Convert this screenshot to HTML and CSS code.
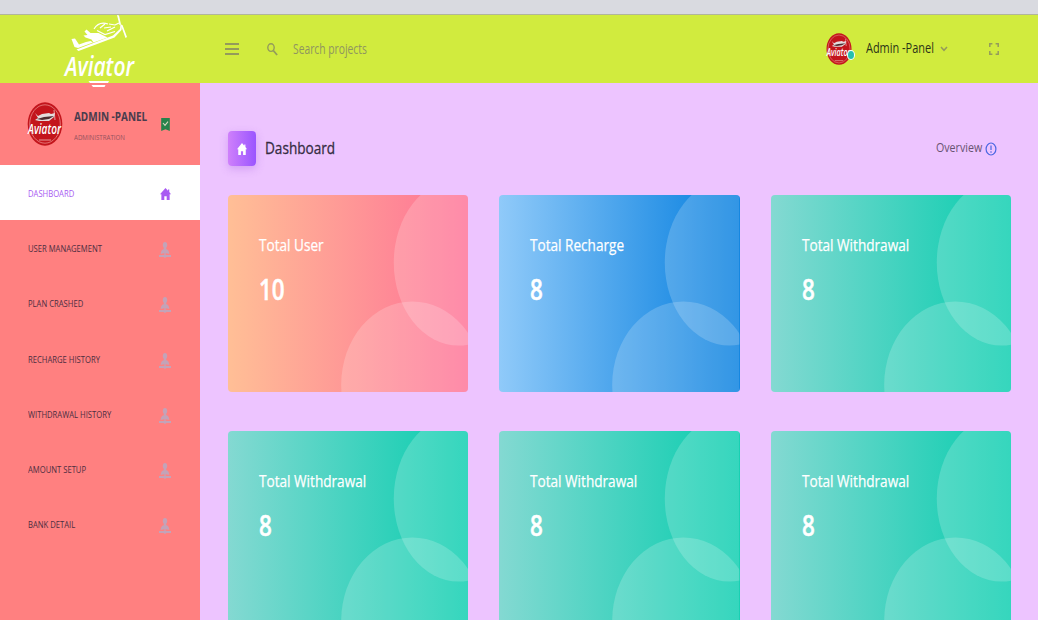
FILE: index.html
```html
<!DOCTYPE html>
<html lang="en">
<head>
<meta charset="utf-8">
<title>Aviator Admin</title>
<link rel="stylesheet" href="styles.css">
</head>
<body>
<svg class="defs" width="0" height="0">
  <symbol id="badge" viewBox="0 0 36 44">
    <ellipse cx="18" cy="22" rx="17.3" ry="21.7" fill="#c3151c"/>
    <ellipse cx="18" cy="22" rx="15.3" ry="19.2" fill="none" stroke="#f09a96" stroke-width=".7"/>
    <path d="M8 11l3 3 4-2 7-1 2 1 4-1-1 4-5 4H12l-4-1 3-2z" fill="#e4dcdc"/>
    <path d="M10 17l7-2 10-1-5 3-7 1z" fill="#4c2c30"/>
    <path d="M27 8l1 10" stroke="#f4d5d5" stroke-width=".7"/>
    <path d="M12 38h12" stroke="#e9a8a6" stroke-width=".9"/>
  </symbol>
  <symbol id="home" viewBox="0 0 12 12"><path d="M6 0l2.7 2.7V1.4h1.4v2.7L12 6.2h-1.5V12H7.3V8.2H4.7V12H1.5V6.2H0z"/></symbol>
  <symbol id="person" viewBox="0 0 12 16">
    <ellipse cx="6" cy="3" rx="2.2" ry="2.9"/>
    <path d="M4.800 5h2.400v2H4.800zM1.700 12c0-3.200 1.600-5.100 4.300-5.100s4.300 1.900 4.300 5.100L7 11.200l-1 1-1-1z"/>
    <path d="M0 13.100h4.500l1.500-1 1.500 1H12v1.900H7.400L6 16l-1.400-1H0z"/>
  </symbol>
  <symbol id="rings" viewBox="0 0 240 196">
    <ellipse cx="230" cy="66.5" rx="64.5" ry="83"/>
    <ellipse cx="184" cy="188.5" rx="71" ry="83"/>
  </symbol>
</svg>

<div class="strip"></div>
<header class="topbar">
  <div class="brand">
    <svg class="logo" width="76" height="76" viewBox="0 0 76 76" fill="#fff">
      <path d="M8.500 24l3.500-.5 4 6 7-2.500 4.500-1 2.500 1.500-15 5.500-3.500-1z"/>
      <path d="M13.500 34.500L50 20.500l7-6.500.5-5 1.500 1-.5 5-7 7.500-36 13.500z"/>
      <path d="M20.500 20.500l4-.5-3-3.500 2-2 4 3.500 8 0 9 4.500-14 5-2-3-6-2z"/>
      <g fill="none" stroke="#fff" stroke-width="1.200">
        <path d="M31 14c3-5 8-7 14-5M37 13l5-4M34 15.500l8 4 10-3M46 9l6 1 4-2M41 13l7-1M44 16l8-4"/>
      </g>
      <path d="M54 0l2 .5 2 9-1.500.5zM58 10.500l1.500-.5 4.500 12-1.500 1z"/>
      <text class="script" x="2" y="60.500" font-size="27" textLength="69" lengthAdjust="spacingAndGlyphs">Aviator</text>
      <path d="M25.500 66H46l-1 2H27zM28.500 70h14l-1 2H30z"/>
    </svg>
  </div>
  <svg class="menu" width="14" height="12" viewBox="0 0 14 12" fill="#949b5b"><path d="M0 0h14v2H0zM0 5h14v2H0zM0 10h14v2H0z"/></svg>
  <svg class="search-icon" width="11" height="13" viewBox="0 0 11 13" fill="none" stroke="#949b5b"><ellipse cx="4" cy="4.6" rx="3.2" ry="3.8" stroke-width="1.4"/><path d="M6.3 7.5l3.8 4.5" stroke-width="1.8"/></svg>
  <span class="search"><span class="t t-search">Search projects</span></span>
  <div class="profile">
    <svg class="avatar" width="26" height="32" viewBox="0 0 36 44" preserveAspectRatio="none"><use href="#badge" width="36" height="44"/><text class="script" x="1" y="31.500" font-size="14" textLength="33" lengthAdjust="spacingAndGlyphs" fill="#fff">Aviator</text></svg>
    <i class="online"></i>
  </div>
  <span class="username"><span class="t t-user">Admin -Panel</span></span>
  <svg class="caret" width="8" height="6" viewBox="0 0 8 6" fill="none" stroke="#949b5b" stroke-width="1.5"><path d="M1 1l3 3.3L7 1"/></svg>
  <svg class="full" width="10" height="12" viewBox="0 0 10 12" fill="none" stroke="#949b5b" stroke-width="1.5"><path d="M.8 4V.8H3.4M6.6.8h2.6V4M9.2 8v3.2H6.6M3.4 11.2H.8V8"/></svg>
</header>

<div class="body">
  <aside class="sidebar">
    <div class="me">
      <svg class="avatar" width="36" height="44" viewBox="0 0 36 44"><use href="#badge" width="36" height="44"/><text class="script" x="1" y="31.500" font-size="14" textLength="33" lengthAdjust="spacingAndGlyphs" fill="#fff">Aviator</text></svg>
      <div class="me-text">
        <div class="me-name"><span class="t t-name">ADMIN -PANEL</span></div>
        <div class="me-role"><span class="t t-role">ADMINISTRATION</span></div>
      </div>
      <svg class="bookmark" width="9" height="13" viewBox="0 0 9 13"><path d="M.2 0h8.600v13L4.500 11.200.2 13z" fill="#26834b"/><path d="M2 5l2 2.300L7 3.700" fill="none" stroke="#d8d8c2" stroke-width="1.100"/></svg>
    </div>
    <nav>
      <a class="item active"><span class="t t-nav">DASHBOARD</span><svg class="ni" width="11" height="12" viewBox="0 0 12 12" preserveAspectRatio="none"><use href="#home"/></svg></a>
      <a class="item"><span class="t t-nav">USER MANAGEMENT</span><svg class="ni" width="12" height="16"><use href="#person"/></svg></a>
      <a class="item"><span class="t t-nav">PLAN CRASHED</span><svg class="ni" width="12" height="16"><use href="#person"/></svg></a>
      <a class="item"><span class="t t-nav">RECHARGE HISTORY</span><svg class="ni" width="12" height="16"><use href="#person"/></svg></a>
      <a class="item"><span class="t t-nav">WITHDRAWAL HISTORY</span><svg class="ni" width="12" height="16"><use href="#person"/></svg></a>
      <a class="item"><span class="t t-nav">AMOUNT SETUP</span><svg class="ni" width="12" height="16"><use href="#person"/></svg></a>
      <a class="item"><span class="t t-nav">BANK DETAIL</span><svg class="ni" width="12" height="16"><use href="#person"/></svg></a>
    </nav>
  </aside>
  <main class="main">
    <div class="head">
      <span class="tile"><svg width="10" height="12" viewBox="0 0 12 12" preserveAspectRatio="none" fill="#fff"><use href="#home"/></svg></span>
      <h1><span class="t t-title">Dashboard</span></h1>
      <span class="overview"><span class="t t-over">Overview</span></span>
      <svg width="12" height="14" viewBox="0 0 12 14" fill="none" stroke="#4a67e2" stroke-width="1.200"><ellipse cx="6" cy="7" rx="4.900" ry="6"/><path d="M6 3.500v4.500M6 9.300v1.500"/></svg>
    </div>
    <section class="cards">
      <article class="card pink"><svg class="rings"><use href="#rings"/></svg><h2><span class="t t-card">Total User</span></h2><p><span class="t t-num">10</span></p></article>
      <article class="card blue"><svg class="rings"><use href="#rings"/></svg><h2><span class="t t-card">Total Recharge</span></h2><p><span class="t t-num">8</span></p></article>
      <article class="card green"><svg class="rings"><use href="#rings"/></svg><h2><span class="t t-card">Total Withdrawal</span></h2><p><span class="t t-num">8</span></p></article>
      <article class="card green"><svg class="rings"><use href="#rings"/></svg><h2><span class="t t-card">Total Withdrawal</span></h2><p><span class="t t-num">8</span></p></article>
      <article class="card green"><svg class="rings"><use href="#rings"/></svg><h2><span class="t t-card">Total Withdrawal</span></h2><p><span class="t t-num">8</span></p></article>
      <article class="card green"><svg class="rings"><use href="#rings"/></svg><h2><span class="t t-card">Total Withdrawal</span></h2><p><span class="t t-num">8</span></p></article>
    </section>
  </main>
</div>
</body>
</html>
```
FILE: styles.css
```css
* { box-sizing: border-box; }
body {
  margin: 0;
  height: 620px;
  overflow: hidden;
  display: flex;
  flex-direction: column;
  font-family: "Open Sans", "Noto Sans", sans-serif;
  background: #edc4ff;
}
svg { display: block; flex: none; }
.defs { position: absolute; }
h1, h2, p { margin: 0; font-weight: 400; }

/* Condensed lettering: text is set at full width and narrowed from its left edge. */
.t { display: inline-block; white-space: nowrap; transform-origin: 0 50%; }
.script { font-family: "Open Sans", sans-serif; font-style: italic; font-weight: 600; }

.strip { flex: none; height: 15px; background: #d9dae0; border-bottom: 1px solid #b1b59a; }
.topbar {
  flex: none;
  height: 68px;
  display: flex;
  align-items: center;
  background: #d1eb3e;
  position: relative;
  z-index: 2;
}
.brand { width: 225px; height: 68px; padding-left: 63px; }
.logo, .avatar { overflow: visible; }
.menu { margin-right: 28px; }
.search-icon { margin-right: 15px; }
.search { width: 533px; margin-top: -1px; font-size: 14px; color: #8f9560; }
.t-search { transform: scaleX(.735); }
.profile { position: relative; width: 40px; }
.online {
  position: absolute;
  left: 21px;
  top: 17px;
  width: 8px;
  height: 10px;
  border: 1.5px solid #fff;
  border-radius: 50%;
  background: #25bfae;
}
.username { width: 74px; margin-top: -4px; font-size: 15px; color: #2c3318; }
.t-user { transform: scaleX(.73); }
.full { margin-left: 41px; }

.body { flex: 1; display: flex; min-height: 0; }
.sidebar { flex: none; width: 200px; background: #ff8080; color: #4d2e40; }
.me { height: 82px; padding: 0 30px 0 27px; display: flex; align-items: center; }
.me-text { width: 98px; padding: 6px 0 0 11px; }
.me-name { height: 21px; line-height: 21px; font-size: 12px; font-weight: 700; color: #4a3c4d; }
.me-role { height: 21px; line-height: 21px; font-size: 7.5px; color: #94525e; }
.t-name { transform: scaleX(.83); }
.t-role { transform: scaleX(.82); }
.item {
  height: 55.2px;
  padding: 0 29px 0 28px;
  display: flex;
  align-items: center;
  justify-content: space-between;
  font-size: 9px;
}
.item.active { background: #fff; color: #a85af2; margin-bottom: 1px; padding-top: 2px; }
.t-nav { transform: scaleX(.85); }
.ni { fill: #c3a3b8; margin-top: 3px; }
.active .ni { fill: #a85af2; margin-top: 0; }

.main { flex: 1; padding: 48px 27px 0 28px; }
.head { height: 35px; display: flex; align-items: center; padding-right: 14px; }
.tile {
  width: 28px;
  height: 35px;
  border-radius: 4px;
  display: flex;
  align-items: center;
  justify-content: center;
  background: linear-gradient(90deg, #cf80fb, #9a55ff);
  box-shadow: 0 3px 8px rgba(150, 80, 220, .3);
}
h1 { flex: 1; padding-left: 9px; margin-top: -2px; font-size: 17px; color: #352c42; -webkit-text-stroke: .3px; }
.t-title { transform: scaleX(.8); }
.overview { width: 49px; margin-top: -3px; font-size: 13.500px; color: #675371; }
.t-over { transform: scaleX(.79); }

.cards {
  margin-top: 29.400px;
  display: grid;
  grid-template-columns: repeat(3, 240.400px);
  grid-auto-rows: 196.500px;
  gap: 39.400px 30.900px;
}
.card {
  position: relative;
  overflow: hidden;
  border-radius: 4px;
  padding: 38px 0 0 31px;
  color: #fff;
}
.rings { position: absolute; left: 0; top: -.5px; width: 240.400px; height: 198px; fill: rgba(255, 255, 255, .19); }
.pink { background: linear-gradient(90deg, #ffbf96, #fe7096); }
.blue { background: linear-gradient(90deg, #90caf9, #047edf 99%); }
.green { background: linear-gradient(90deg, #84d9d2, #07cdae); }
.card h2 { height: 24px; line-height: 24px; font-size: 17px; -webkit-text-stroke: .25px; }
.card p { height: 36px; line-height: 36px; margin-top: 14px; font-size: 28px; font-weight: 600; -webkit-text-stroke: .5px; }
.t-card { transform: scaleX(.8); }
.t-num { transform: scaleX(.8); }
```
